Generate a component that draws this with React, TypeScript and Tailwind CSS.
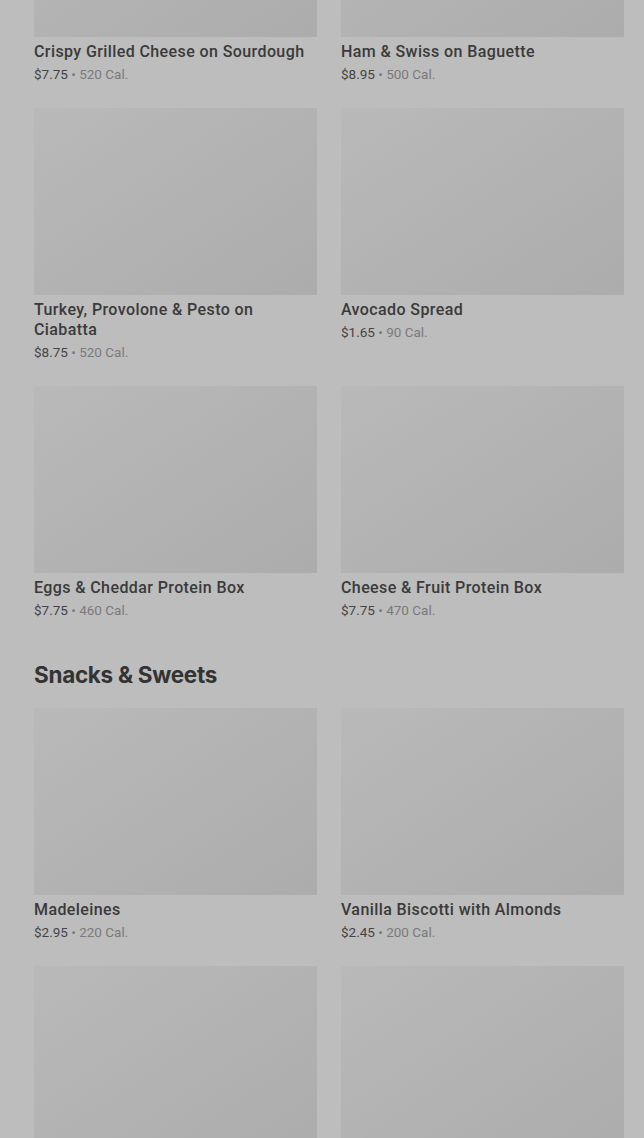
import React from "react";

type Item = { name: string; price: string; cal: string };

const top: Item[] = [
  { name: "Crispy Grilled Cheese on Sourdough", price: "$7.75", cal: "520 Cal." },
  { name: "Ham & Swiss on Baguette", price: "$8.95", cal: "500 Cal." },
  { name: "Turkey, Provolone & Pesto on Ciabatta", price: "$8.75", cal: "520 Cal." },
  { name: "Avocado Spread", price: "$1.65", cal: "90 Cal." },
  { name: "Eggs & Cheddar Protein Box", price: "$7.75", cal: "460 Cal." },
  { name: "Cheese & Fruit Protein Box", price: "$7.75", cal: "470 Cal." },
];

const snacks: Item[] = [
  { name: "Madeleines", price: "$2.95", cal: "220 Cal." },
  { name: "Vanilla Biscotti with Almonds", price: "$2.45", cal: "200 Cal." },
  { name: "", price: "", cal: "" },
  { name: "", price: "", cal: "" },
];

function Card({ item }: { item: Item }) {
  return (
    <div className="flex flex-col">
      <div className="h-[187px] w-full bg-gradient-to-br from-[#b9b9b9] to-[#acacac]" />
      {item.name && (
        <>
          <h3 className="mt-[5px] text-[16px] leading-[20px] font-medium text-[#3a3a3a] tracking-[0.4px]">
            {item.name}
          </h3>
          <p className="mt-[2px] text-[13.5px] leading-[20px] text-[#7a7a7a]">
            <span className="text-[#444]">{item.price}</span> • {item.cal}
          </p>
        </>
      )}
    </div>
  );
}

export default function App() {
  return (
    <div
      className="h-[1138px] overflow-hidden bg-[#bdbdbd]"
      style={{ fontFamily: "Roboto, 'Noto Sans', sans-serif" }}
    >
      <div className="pl-[34px] pr-[20px] mt-[-150px]">
        <div className="grid grid-cols-2 gap-x-6 gap-y-6">
          {top.map((it, i) => (
            <Card key={i} item={it} />
          ))}
        </div>
        <h2
          className="mt-[39px] mb-[17px] text-[22.5px] leading-[32px] font-bold text-[#333] tracking-[-0.3px]"
          style={{ fontFamily: "Inter, sans-serif" }}
        >
          Snacks &amp; Sweets
        </h2>
        <div className="grid grid-cols-2 gap-x-6 gap-y-6">
          {snacks.map((it, i) => (
            <Card key={i} item={it} />
          ))}
        </div>
      </div>
    </div>
  );
}
